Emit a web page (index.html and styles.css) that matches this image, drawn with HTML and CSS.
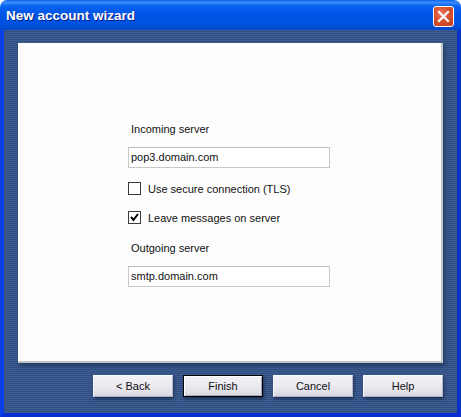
FILE: index.html
```html
<!DOCTYPE html>
<html>
<head>
<meta charset="utf-8">
<link rel="stylesheet" href="styles.css">
</head>
<body>
<div class="window">
  <div class="titlebar">
    <span class="title">New account wizard</span>
    <span class="close"><svg width="13" height="13" viewBox="0 0 13 13"><path d="M2 2 L11 11 M11 2 L2 11" stroke="#fff" stroke-width="2.2" stroke-linecap="square"/></svg></span>
  </div>
  <div class="client">
    <div class="panel">
      <div class="form">
        <div class="label">Incoming server</div>
        <div class="input">pop3.domain.com</div>
        <div class="check"><span class="box"></span><span>Use secure connection (TLS)</span></div>
        <div class="check"><span class="box"><svg width="11" height="11" viewBox="0 0 11 11"><path d="M2 5 L4.5 8 L9 2" fill="none" stroke="#000" stroke-width="2"/></svg></span><span>Leave messages on server</span></div>
        <div class="label label2">Outgoing server</div>
        <div class="input">smtp.domain.com</div>
      </div>
    </div>
    <div class="buttons">
      <div class="btn">&lt; Back</div>
      <div class="btn default">Finish</div>
      <div class="btn">Cancel</div>
      <div class="btn">Help</div>
    </div>
  </div>
</div>
</body>
</html>
```
FILE: styles.css
```css
* { box-sizing: border-box; }
html, body { margin: 0; padding: 0; background: #fff; }
body { font-family: "Liberation Sans", sans-serif; }
.window { width: 461px; height: 417px; display: flex; flex-direction: column; }
.titlebar {
  height: 30px;
  border-radius: 7px 7px 0 0;
  background: linear-gradient(to bottom, #0a5fe6 0%, #3c8dff 8%, #0a62f0 20%, #0055e6 50%, #0052e0 80%, #0046c8 100%);
  display: flex; align-items: center; justify-content: space-between;
  padding: 0 7px 0 6px;
}
.title {
  color: #fff; font-family: "Liberation Sans", sans-serif; font-weight: bold; font-size: 13.5px;
  text-shadow: 1px 1px 0 #0a1e8c;
  padding-top: 1px;
}
.close {
  width: 21px; height: 21px; border: 1px solid #fff; border-radius: 3px;
  background: radial-gradient(circle at 40% 35%, #e8765a 0%, #d7522e 45%, #c0391a 100%);
  display: flex; align-items: center; justify-content: center;
  margin-top: 2px;
}
.client {
  flex: 1;
  border-left: 4px solid #0a3ee6; border-right: 4px solid #0a30cc; border-bottom: 4px solid #0a2fd0;
  background: repeating-linear-gradient(to bottom, #3d5d92 0px, #3d5d92 1px, #32507f 1px, #32507f 2px);
  padding: 13px 14px 0 14px;
  display: flex; flex-direction: column;
}
.panel {
  height: 320px;
  background: #fdfdfd;
  border-right: 2px solid #c4c4c4; border-bottom: 2px solid #c4c4c4;
  box-shadow: 2px 3px 5px rgba(10, 25, 60, 0.45);
  padding: 80px 0 0 110px;
}
.form { width: 202px; display: flex; flex-direction: column; font-size: 11px; color: #111; }
.label { height: 13px; line-height: 13px; padding-left: 3px; }
.label2 { margin-top: 2px; }
.input {
  margin-top: 11px; height: 21px; width: 202px;
  border: 1px solid #c8c8c8; border-top-color: #bdbdbd; background: #fff;
  line-height: 19px; padding-left: 2px;
}
.check { display: flex; align-items: center; height: 13px; margin-top: 16px; }
.check + .check { margin-top: 16px; }
.check + .label { margin-top: 18px; }
.input + .check { margin-top: 14px; }
.box {
  width: 13px; height: 13px; border: 1px solid #3a3a3a; background: #fff;
  margin-right: 7px; display: flex; align-items: center; justify-content: center;
}
.buttons { display: flex; justify-content: flex-end; gap: 10px; margin-top: 12px; }
.btn {
  width: 80px; height: 22px;
  background: linear-gradient(to bottom, #f2f2f6 0%, #e9e8ef 60%, #d8d7e0 100%);
  border: 1px solid #f8f8fc; border-bottom-color: #b0b0c0; border-right-color: #b8b8c8;
  box-shadow: 1px 2px 3px rgba(5, 15, 45, 0.55);
  font-size: 11px; color: #111;
  display: flex; align-items: center; justify-content: center;
}
.btn.default { border: 1px solid #000; box-shadow: inset 1px 1px 0 #fff, inset -1px -1px 0 #a8a8b8, 1px 2px 3px rgba(5, 15, 45, 0.55); }
```
